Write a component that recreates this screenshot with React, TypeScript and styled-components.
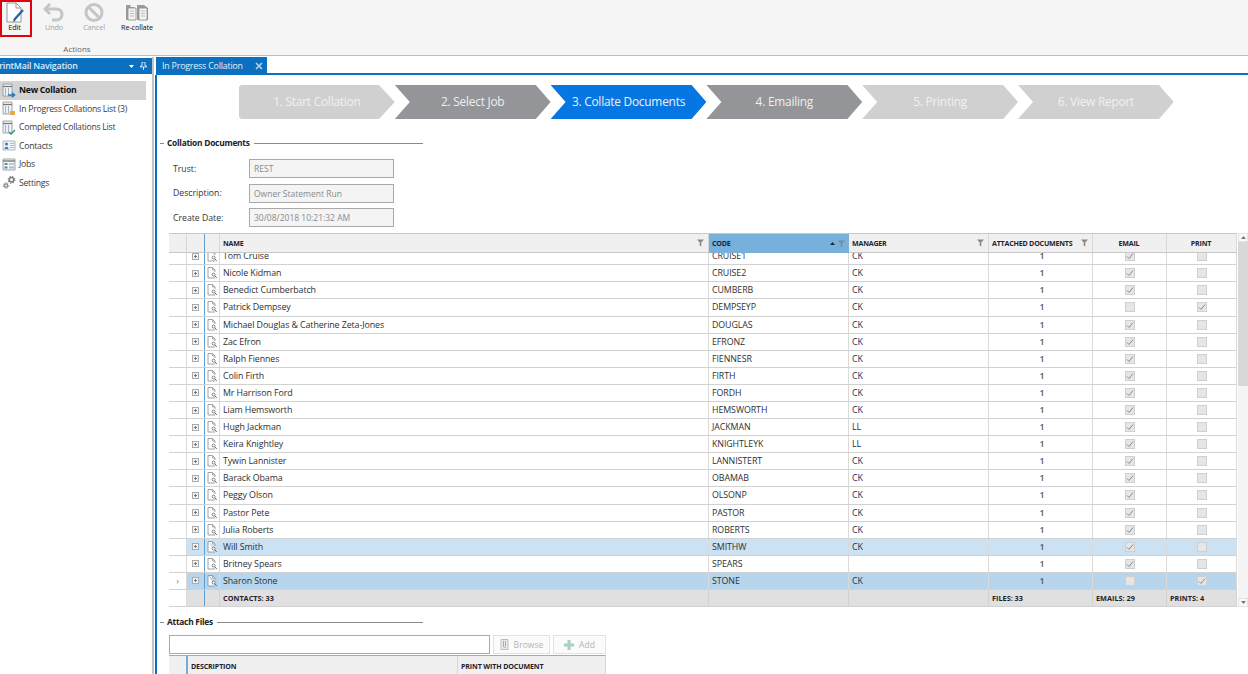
import React from "react";
import styled, { createGlobalStyle } from "styled-components";

const Global = createGlobalStyle`
  html, body { margin: 0; padding: 0; background: #fff; }
  body { font-family: "Open Sans", "Noto Sans", "Liberation Sans", sans-serif; font-size: 9px; color: #333; }
  * { box-sizing: border-box; }
`;

const Page = styled.div`width: 1248px; height: 674px; overflow: hidden; display: flex; flex-direction: column; background: #fff;`;

const Ribbon = styled.header`height: 56px; flex: none; background: #f5f5f5; border-bottom: 1px solid #bdbdbd; display: flex;`;
const RibbonGroup = styled.div`width: 162px; display: flex; flex-direction: column;`;
const RibbonButtons = styled.div`display: flex; height: 44px;`;
const RibbonButton = styled.button<{ $w: number; $active?: boolean; $off?: boolean }>`
  width: ${p => p.$w}px; height: ${p => (p.$active ? 37 : 36)}px; padding: ${p => (p.$active ? "0 3px 0 0" : "2px 0 0")};
  background: transparent; border: ${p => (p.$active ? "2px solid #e3000f" : "none")};
  display: flex; flex-direction: column; align-items: center;
  font: 400 7.3px "Open Sans", sans-serif; letter-spacing: -0.02em; color: ${p => (p.$off ? "#a3a3a3" : "#111")};
  span { margin-top: -1px; line-height: 10px; white-space: nowrap; }
`;
const RibbonLabel = styled.div`text-align: center; padding-right: 8px; font-size: 8px; line-height: 10px; color: #666;`;

const Main = styled.div`flex: 1; display: flex; min-height: 0; padding-top: 1px;`;
const Nav = styled.nav`width: 154px; flex: none; border-right: 2px solid #c4c4c4; padding-top: 1px; overflow: hidden;`;
const NavHeader = styled.div`height: 16px; background: #0a70bf; color: #dfeefb; display: flex; align-items: center; font-size: 8.8px; font-weight: 600; padding-right: 5px; white-space: nowrap;`;
const NavTitle = styled.span`margin-left: -6px; flex: 1; letter-spacing: -0.02em;`;
const NavTools = styled.span`display: flex; align-items: center; gap: 6px; svg { display: block; }`;
const NavList = styled.ul`list-style: none; margin: 7px 0 0; padding: 0 6px 0 0;`;
const NavItem = styled.li<{ $on?: boolean }>`
  height: 18.5px; display: flex; align-items: center; gap: 3px; padding-left: 2px; white-space: nowrap;
  font-size: 8.7px; letter-spacing: -0.03em; color: #3b3b3b;
  ${p => p.$on && "background:#d3d3d3;font-weight:700;color:#111;"}
`;

const Work = styled.section`flex: 1; min-width: 0; display: flex; flex-direction: column; padding-left: 1px;`;
const TabBar = styled.div`height: 18px; flex: none; margin-left: 1px; border-bottom: 2px solid #0a70bf; display: flex;`;
const Tab = styled.div`width: 111px; height: 18px; background: #0a70bf; color: #e4f0fa; font-size: 8.8px; letter-spacing: -0.02em; display: flex; align-items: center; justify-content: space-between; padding: 0 4px 0 6px; white-space: nowrap;`;
const Pane = styled.div`flex: 1; min-height: 0; border-left: 2px solid #0a70bf; overflow: hidden;`;

const Steps = styled.ol`list-style: none; margin: 10px 0 0 82px; padding: 0; display: flex; height: 34px;`;
const Step = styled.li<{ $kind: "idle" | "done" | "now"; $first?: boolean }>`
  width: 155.8px; height: 34px; display: flex; align-items: center; justify-content: center; padding-bottom: 2px;
  font-size: 11.9px; letter-spacing: -0.02em;
  color: ${p => (p.$kind === "idle" ? "#f0f0f0" : "#eef0f2")};
  background: ${p => (p.$kind === "idle" ? "#d0d0d0" : p.$kind === "done" ? "#939598" : "#0677e2")};
  clip-path: ${p => (p.$first
    ? "polygon(2px 0, 140px 0, 100% 50%, 140px 100%, 2px 100%, 0 calc(100% - 2px), 0 2px)"
    : "polygon(0 0, 141px 0, 100% 50%, 141px 100%, 0 100%, 15px 50%)")};
`;

const SectionHead = styled.div<{ $top: number }>`
  display: flex; align-items: center; gap: 3px; width: 263px; margin: ${p => p.$top}px 0 0 3px; font-size: 8.4px; font-weight: 700; letter-spacing: -0.03em; color: #222; line-height: 12px; white-space: nowrap;
  &::before { content: ""; width: 4px; height: 1px; background: #8a8a8a; }
  &::after { content: ""; flex: 1; height: 1px; background: #8a8a8a; margin-left: 1px; }
`;

const Form = styled.div`margin: 10px 0 0 16px; display: grid; grid-template-columns: 76px 145px; grid-auto-rows: 19px; row-gap: 5.5px; align-items: center; font-size: 8.7px;`;
const FormLabel = styled.label`color: #333;`;
const ReadOnly = styled.div`height: 19px; background: #f4f4f4; border: 1px solid #a9a9a9; color: #8a8a8a; padding-left: 4px; line-height: 17px; font-size: 8.5px; white-space: nowrap;`;

const GridWrap = styled.div`display: flex; gap: 1px; margin: 6px 0 0 12px;`;
const Table = styled.div`width: 1068px; height: 374px; display: flex; flex-direction: column;`;
const COLS = "18px 18px 15px 489px 140px 140px 104px 74px 70px";
const HeadRow = styled.div`height: 20px; flex: none; display: grid; grid-template-columns: ${COLS}; background: #f0f0f0; border-top: 1px solid #c8c8c8; border-bottom: 1px solid #c8c8c8;`;
const HeadCell = styled.div<{ $sort?: boolean; $center?: boolean; $blue?: boolean }>`
  display: flex; align-items: center; gap: 3px; padding: 0 4px 1px 3px; font-size: 7.1px; font-weight: 700; letter-spacing: -0.03em; color: #1e1e2c; text-transform: uppercase; white-space: nowrap;
  border-right: 1px solid ${p => (p.$blue ? "#5b9fd6" : "#d8d8d8")};
  ${p => p.$center && "justify-content:center;"}
  ${p => p.$sort && "background:#78b0dc;margin-bottom:-1px;color:#16263a;border-right:none;"}
  b { flex: 1; font-weight: 700; }
`;
const Body = styled.div`flex: none; height: 337px; display: flex; flex-direction: column; justify-content: flex-end; overflow: hidden;`;
const Row = styled.div<{ $bg?: string }>`
  height: 17.1px; flex: none; display: grid; grid-template-columns: ${COLS}; background: ${p => p.$bg ?? "#fff"}; border-bottom: 1px solid #d2d2d2;
`;
const Cell = styled.div<{ $center?: boolean; $blue?: boolean; $plain?: boolean; $strong?: boolean }>`
  display: flex; align-items: center; padding-left: 3px; overflow: hidden; white-space: nowrap; font-size: 8.85px; letter-spacing: -0.01em;
  color: ${p => (p.$strong ? "#1c2b4a" : "#2f2f2f")};
  border-right: 1px solid ${p => (p.$blue ? "#5b9fd6" : "#dadada")};
  ${p => p.$center && "justify-content:center;padding-left:0;"}
  ${p => p.$plain && "background:#fff;"}
`;
const CountCell = styled(Cell)`padding-left: 3px; font-weight: 600; color: #555;`;
const ExpandBox = styled.span`width: 7px; height: 7px; border: 1px solid #ababab; background: #f3f3f3; position: relative; &::before { content: ""; position: absolute; left: 1px; right: 1px; top: 2px; height: 1px; background: #777; } &::after { content: ""; position: absolute; top: 1px; bottom: 1px; left: 2px; width: 1px; background: #777; }`;
const Check = styled.span`width: 10px; height: 10px; background: #e6e6e6; border: 1px solid #cfcfcf; display: flex; align-items: center; justify-content: center; svg { display: block; }`;
const Arrow = styled.span`color: #777; font-size: 9px; line-height: 1;`;
const FootRow = styled.div`height: 17px; flex: none; display: grid; grid-template-columns: ${COLS}; border-bottom: 1px solid #d2d2d2;`;
const FootCell = styled.div<{ $plain?: boolean; $blue?: boolean }>`
  display: flex; align-items: center; padding-left: 3px; font-size: 7.3px; font-weight: 700; color: #1e1e2c; text-transform: uppercase; white-space: nowrap; background: ${p => (p.$plain ? "#fff" : "#e0e0e0")};
  border-right: 1px solid ${p => (p.$blue ? "#5b9fd6" : p.$plain ? "#dadada" : "#d2d2d2")};
`;

const ScrollBar = styled.div`width: 10px; height: 374px; display: flex; flex-direction: column; background: #f4f4f4;`;
const ScrollBtn = styled.div`height: 9px; flex: none; background: #fafafa; border: 1px solid #e2e2e2; display: flex; align-items: center; justify-content: center; svg { display: block; }`;
const ScrollThumb = styled.div`height: 144px; flex: none; background: #d8d8d8;`;
const ScrollRest = styled.div`flex: 1;`;

const AttachRow = styled.div`display: flex; gap: 3px; margin: 7px 0 0 12px; height: 19px;`;
const AttachInput = styled.div`width: 321px; background: #fff; border: 1px solid #a9a9a9;`;
const AttachBtn = styled.button<{ $w: number }>`
  width: ${p => p.$w}px; height: 19px; padding: 0; background: #fbfbfb; border: 1px solid #e2e2e2; color: #b4b4b4; font: 8.6px "Open Sans", sans-serif; display: flex; align-items: center; justify-content: center; gap: 5px;
`;
const MiniGrid = styled.div`margin: 1px 0 0 12px; width: 437px; height: 20px; display: grid; grid-template-columns: 19px 270px 148px; background: #f0f0f0; border-top: 1px solid #a9a9a9; border-right: 1px solid #cfcfcf;`;
const MiniCell = styled.div<{ $mark?: boolean }>`
  display: flex; align-items: center; padding-left: 3px; font-size: 7.1px; font-weight: 700; letter-spacing: -0.02em; color: #1e1e2c; white-space: nowrap;
  border-right: ${p => (p.$mark ? "2px solid #78a9d4" : "1px solid #d6d6d6")};
`;

const PageEdit = () => (
  <svg width="22" height="21" viewBox="0 0 22 21" fill="none">
    <path d="M3 1h9l5 5v14H3z" fill="#fff" stroke="#8a8a8a" strokeWidth=".9" />
    <path d="M12 1v5h5" stroke="#8a8a8a" strokeWidth=".9" />
    <path d="M10 18l9-10" stroke="#2a62a8" strokeWidth="2.4" />
    <path d="M9 20l1-2.4 1.4 1.2z" fill="#333" />
  </svg>
);
const UndoIcon = () => (
  <svg width="22" height="21" viewBox="0 0 22 21" fill="none">
    <path d="M7 2L2 7l5 5" stroke="#c5c5c5" strokeWidth="3" />
    <path d="M3 7h10c4 0 6 2.5 6 5.5S17 18 13 18H9" stroke="#c5c5c5" strokeWidth="3" />
  </svg>
);
const BanIcon = () => (
  <svg width="22" height="21" viewBox="0 0 22 21" fill="none">
    <circle cx="11" cy="10.5" r="8" stroke="#c5c5c5" strokeWidth="3" />
    <path d="M5.5 5l11 11" stroke="#c5c5c5" strokeWidth="3" />
  </svg>
);
const CollateIcon = () => (
  <svg width="24" height="21" viewBox="0 0 24 21" fill="none">
    <path d="M1 3h5l-1 2h4v13H1z" fill="#9c9c9c" />
    <path d="M3 6h8v12H3z" fill="#f2f2f2" stroke="#8a8a8a" strokeWidth=".8" />
    <path d="M5 9h4M5 11.5h4M5 14h4" stroke="#b0b0b0" strokeWidth=".8" />
    <path d="M12 3h7l4 3v12H12z" fill="#9c9c9c" />
    <path d="M14 6h8v12h-8z" fill="#f2f2f2" stroke="#8a8a8a" strokeWidth=".8" />
    <path d="M16 9h4M16 11.5h4M16 14h4" stroke="#b0b0b0" strokeWidth=".8" />
  </svg>
);
const NavDoc = ({ kind }: { kind: "arrow" | "lock" | "check" }) => (
  <svg width="14" height="15" viewBox="0 0 14 15" fill="none">
    <path d="M1 1h9v12H1z" fill="#eef1f4" stroke="#8a8f96" strokeWidth=".8" />
    <path d="M1 3.5h9" stroke="#777" strokeWidth="1.2" />
    <path d="M3.5 5v7M6.5 5v7" stroke="#a4b4c4" strokeWidth="1" />
    {kind === "arrow" && <path d="M6 12h6M10 9.8l2.6 2.2-2.6 2.2" stroke="#2e73b8" strokeWidth="1.4" />}
    {kind === "lock" && <path d="M8 10h5v4H8z" fill="#e8a84a" />}
    {kind === "check" && <path d="M7 12l2 2 4-4" stroke="#3c9a68" strokeWidth="1.5" />}
  </svg>
);
const ContactsIcon = () => (
  <svg width="14" height="15" viewBox="0 0 14 15" fill="none">
    <path d="M1 3h12v9H1z" fill="#f2f4f7" stroke="#9ba3ad" strokeWidth=".8" />
    <circle cx="4.5" cy="6" r="1.5" fill="#3e78b8" />
    <path d="M2.5 11c0-3 4-3 4 0z" fill="#3e78b8" />
    <path d="M8 5.5h4M8 7.5h4M8 9.5h4" stroke="#a8a8a8" strokeWidth=".8" />
  </svg>
);
const JobsIcon = () => (
  <svg width="14" height="15" viewBox="0 0 14 15" fill="none">
    <path d="M1 2h12v11H1z" fill="#f2f4f7" stroke="#8a8f96" strokeWidth=".8" />
    <path d="M1 4h12" stroke="#666" strokeWidth="1.2" />
    <path d="M2.5 6h3v2h-3z" fill="#5a9a78" />
    <path d="M7 6h5v2H7z" fill="#b9c7d6" />
    <path d="M2.5 9.5h3v2h-3z" fill="#4a88c0" />
    <path d="M7 9.5h5v2H7z" fill="#a8bdd2" />
  </svg>
);
const SettingsIcon = () => (
  <svg width="14" height="15" viewBox="0 0 14 15" fill="none">
    <circle cx="9.5" cy="4.8" r="2.2" stroke="#7a7a7a" strokeWidth="1.5" />
    <circle cx="9.5" cy="4.8" r="3.4" stroke="#7a7a7a" strokeWidth="1.1" strokeDasharray="1.3 1.4" />
    <circle cx="4" cy="10.5" r="1.6" stroke="#8a8a8a" strokeWidth="1.4" />
    <circle cx="4" cy="10.5" r="2.8" stroke="#8a8a8a" strokeWidth="1" strokeDasharray="1.2 1.2" />
  </svg>
);
const DocLens = () => (
  <svg width="11" height="12" viewBox="0 0 11 12" fill="none">
    <path d="M1 .5h4.5L8 3v2M8 10.5v.5H1V.5" stroke="#8a8a8a" strokeWidth=".8" fill="#fff" />
    <path d="M5.5.5V3H8" stroke="#8a8a8a" strokeWidth=".7" />
    <circle cx="6.6" cy="7.6" r="1.5" fill="#fff" stroke="#666" strokeWidth=".8" />
    <path d="M7.8 8.8l2 2" stroke="#666" strokeWidth="1" />
  </svg>
);
const Funnel = ({ c = "#888" }: { c?: string }) => (
  <svg width="7" height="7" viewBox="0 0 7 7"><path d="M0 .5h7L4.3 3.4V7H2.7V3.4z" fill={c} /></svg>
);
const Tick = ({ c = "#8a8a8a" }: { c?: string }) => (
  <svg width="8" height="8" viewBox="0 0 8 8" fill="none"><path d="M1 4.5l2 2 4-5" stroke={c} strokeWidth="1" /></svg>
);
const Tri = ({ down, c = "#777" }: { down?: boolean; c?: string }) => (
  <svg width="5" height="3" viewBox="0 0 5 3"><path d={down ? "M0 0h5L2.5 3z" : "M0 3h5L2.5 0z"} fill={c} /></svg>
);

type Rec = [string, string, string, boolean, boolean, string?];
const rows: Rec[] = [
  ["Tom Cruise", "CRUISE1", "CK", true, false],
  ["Nicole Kidman", "CRUISE2", "CK", true, false],
  ["Benedict Cumberbatch", "CUMBERB", "CK", true, false],
  ["Patrick Dempsey", "DEMPSEYP", "CK", false, true],
  ["Michael Douglas & Catherine Zeta-Jones", "DOUGLAS", "CK", true, false],
  ["Zac Efron", "EFRONZ", "CK", true, false],
  ["Ralph Fiennes", "FIENNESR", "CK", true, false],
  ["Colin Firth", "FIRTH", "CK", true, false],
  ["Mr Harrison Ford", "FORDH", "CK", true, false],
  ["Liam Hemsworth", "HEMSWORTH", "CK", true, false],
  ["Hugh Jackman", "JACKMAN", "LL", true, false],
  ["Keira Knightley", "KNIGHTLEYK", "LL", true, false],
  ["Tywin Lannister", "LANNISTERT", "CK", true, false],
  ["Barack Obama", "OBAMAB", "CK", true, false],
  ["Peggy Olson", "OLSONP", "CK", true, false],
  ["Pastor Pete", "PASTOR", "CK", true, false],
  ["Julia Roberts", "ROBERTS", "CK", true, false],
  ["Will Smith", "SMITHW", "CK", true, false, "#cce2f2"],
  ["Britney Spears", "SPEARS", "", true, false],
  ["Sharon Stone", "STONE", "CK", false, true, "#b7d6ee"],
];

const steps: [string, "idle" | "done" | "now"][] = [
  ["1. Start Collation", "idle"],
  ["2. Select Job", "done"],
  ["3. Collate Documents", "now"],
  ["4. Emailing", "done"],
  ["5. Printing", "idle"],
  ["6. View Report", "idle"],
];

export default function App() {
  return (
    <Page>
      <Global />
      <Ribbon>
        <RibbonGroup>
          <RibbonButtons>
            <RibbonButton $w={32} $active><PageEdit /><span>Edit</span></RibbonButton>
            <RibbonButton $w={44} $off><UndoIcon /><span>Undo</span></RibbonButton>
            <RibbonButton $w={36} $off><BanIcon /><span>Cancel</span></RibbonButton>
            <RibbonButton $w={50}><CollateIcon /><span>Re-collate</span></RibbonButton>
          </RibbonButtons>
          <RibbonLabel>Actions</RibbonLabel>
        </RibbonGroup>
      </Ribbon>
      <Main>
        <Nav>
          <NavHeader>
            <NavTitle>PrintMail Navigation</NavTitle>
            <NavTools>
              <Tri down c="#fff" />
              <svg width="7" height="8" viewBox="0 0 7 8" fill="none"><path d="M2 0h3v4h1.5v1h-6V4H2zM3.5 5v3" stroke="#fff" strokeWidth=".8" /></svg>
            </NavTools>
          </NavHeader>
          <NavList>
            <NavItem $on><NavDoc kind="arrow" />New Collation</NavItem>
            <NavItem><NavDoc kind="lock" />In Progress Collations List (3)</NavItem>
            <NavItem><NavDoc kind="check" />Completed Collations List</NavItem>
            <NavItem><ContactsIcon />Contacts</NavItem>
            <NavItem><JobsIcon />Jobs</NavItem>
            <NavItem><SettingsIcon />Settings</NavItem>
          </NavList>
        </Nav>
        <Work>
          <TabBar>
            <Tab>
              In Progress Collation
              <svg width="8" height="8" viewBox="0 0 8 8" fill="none"><path d="M1 1l6 6M7 1L1 7" stroke="#b5d5ee" strokeWidth="1.6" /></svg>
            </Tab>
          </TabBar>
          <Pane>
            <Steps>
              {steps.map(([t, k], i) => <Step key={t} $kind={k} $first={i === 0}>{t}</Step>)}
            </Steps>
            <SectionHead $top={18}>Collation Documents</SectionHead>
            <Form>
              <FormLabel>Trust:</FormLabel><ReadOnly>REST</ReadOnly>
              <FormLabel>Description:</FormLabel><ReadOnly>Owner Statement Run</ReadOnly>
              <FormLabel>Create Date:</FormLabel><ReadOnly>30/08/2018 10:21:32 AM</ReadOnly>
            </Form>
            <GridWrap>
              <Table>
                <HeadRow>
                  <HeadCell />
                  <HeadCell $blue />
                  <HeadCell />
                  <HeadCell><b>Name</b><Funnel /></HeadCell>
                  <HeadCell $sort><b>Code</b><Tri c="#1e2a38" /><Funnel c="#6f8da6" /></HeadCell>
                  <HeadCell><b>Manager</b><Funnel /></HeadCell>
                  <HeadCell><b>Attached Documents</b><Funnel /></HeadCell>
                  <HeadCell $center>Email</HeadCell>
                  <HeadCell $center>Print</HeadCell>
                </HeadRow>
                <Body>
                  {rows.map(([name, code, mgr, email, print, bg], i) => (
                    <Row key={code} $bg={bg}>
                      <Cell $center $plain>{i === rows.length - 1 && <Arrow>›</Arrow>}</Cell>
                      <Cell $center $blue><ExpandBox /></Cell>
                      <Cell $center><DocLens /></Cell>
                      <Cell>{name}</Cell>
                      <Cell>{code}</Cell>
                      <Cell $strong>{mgr}</Cell>
                      <CountCell $center>1</CountCell>
                      <Cell $center><Check>{email && <Tick />}</Check></Cell>
                      <Cell $center><Check>{print && <Tick />}</Check></Cell>
                    </Row>
                  ))}
                </Body>
                <FootRow>
                  <FootCell $plain />
                  <FootCell $blue />
                  <FootCell />
                  <FootCell>Contacts: 33</FootCell>
                  <FootCell />
                  <FootCell />
                  <FootCell>Files: 33</FootCell>
                  <FootCell>Emails: 29</FootCell>
                  <FootCell>Prints: 4</FootCell>
                </FootRow>
              </Table>
              <ScrollBar>
                <ScrollBtn><Tri /></ScrollBtn>
                <ScrollThumb />
                <ScrollRest />
                <ScrollBtn><Tri down /></ScrollBtn>
              </ScrollBar>
            </GridWrap>
            <SectionHead $top={9}>Attach Files</SectionHead>
            <AttachRow>
              <AttachInput />
              <AttachBtn $w={57}>
                <svg width="9" height="11" viewBox="0 0 9 11" fill="none"><path d="M1 .5h7v10H1z" fill="#ececec" stroke="#bdbdbd" /><path d="M3.5 2v5.5a1 1 0 002 0V2" stroke="#a8a8a8" /></svg>
                Browse
              </AttachBtn>
              <AttachBtn $w={53}>
                <svg width="10" height="10" viewBox="0 0 10 10"><path d="M3.5 0h3v3.5H10v3H6.5V10h-3V6.5H0v-3h3.5z" fill="#a9cfc0" /></svg>
                Add
              </AttachBtn>
            </AttachRow>
            <MiniGrid>
              <MiniCell $mark />
              <MiniCell>DESCRIPTION</MiniCell>
              <MiniCell>PRINT WITH DOCUMENT</MiniCell>
            </MiniGrid>
          </Pane>
        </Work>
      </Main>
    </Page>
  );
}
